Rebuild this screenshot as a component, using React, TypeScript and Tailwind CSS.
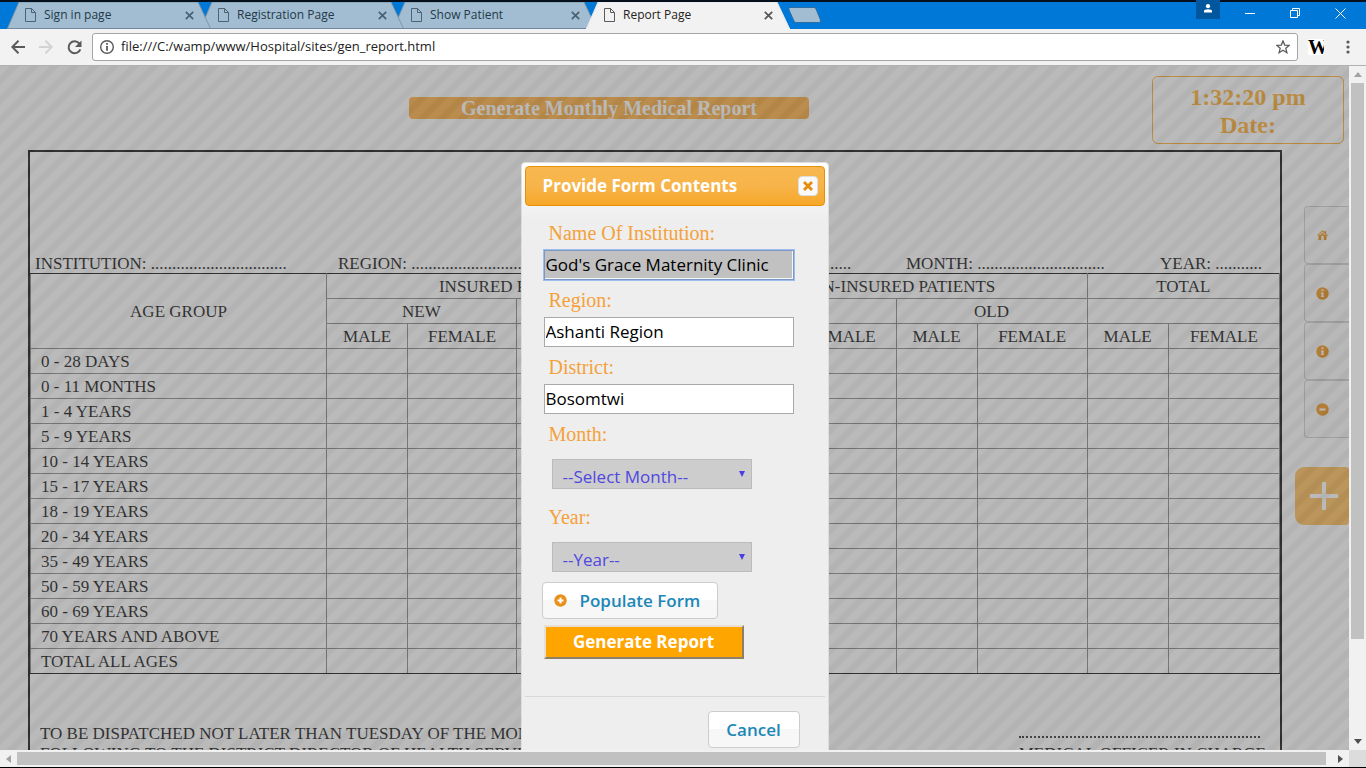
import type { ReactNode } from "react";

const tabs = ["Sign in page", "Registration Page", "Show Patient", "Report Page"];

const ageGroups = [
  "0 - 28 DAYS",
  "0 - 11 MONTHS",
  "1 - 4 YEARS",
  "5 - 9 YEARS",
  "10 - 14 YEARS",
  "15 - 17 YEARS",
  "18 - 19 YEARS",
  "20 - 34 YEARS",
  "35 - 49 YEARS",
  "50 - 59 YEARS",
  "60 - 69 YEARS",
  "70 YEARS AND ABOVE",
  "TOTAL ALL AGES",
];

const cell = "border border-[#808080] p-0 pt-0.5 font-normal";

function Tab({ title, active, order }: { title: string; active: boolean; order: string }) {
  return (
    <div className={`relative -mr-[11px] h-[27px] w-[204px] ${order}`}>
      <svg className="absolute inset-0 h-full w-full" viewBox="0 0 204 27" preserveAspectRatio="none" aria-hidden="true">
        <path
          d="M0.5 26.5 L12 0 H191 L203.5 26.5"
          fill={active ? "#f2f2f2" : "#a2bdd1"}
          stroke={active ? "#dfe8ef" : "#7d96a8"}
          strokeWidth="1"
        />
        {!active && <path d="M0 26.5 H204" stroke="#7288a0" />}
        {active && <path d="M0 26.5 H204" stroke="#f2f2f2" />}
      </svg>
      <div className="relative flex h-full items-center pb-px pl-[18px] pr-[17px]">
        <svg width="11" height="14" viewBox="0 0 11 14" fill="none" stroke={active ? "#5a5a5a" : "#4d6373"} aria-hidden="true">
          <path d="M0.5 0.5 H6.5 L10.5 4.5 V13.5 H0.5 Z M6.5 0.5 V4.5 H10.5" />
        </svg>
        <button type="button" className={`ml-2 flex-1 text-left text-[12px] ${active ? "text-[#222]" : "text-[#23394a]"}`}>
          {title}
        </button>
        <button type="button" aria-label={`Close ${title}`} className="p-0">
          <svg width="9" height="9" viewBox="0 0 9 9" stroke={active ? "#555" : "#4a6070"} strokeWidth="1.7">
            <path d="M0.8 0.8 L8.2 8.2 M8.2 0.8 L0.8 8.2" />
          </svg>
        </button>
      </div>
    </div>
  );
}

function WindowBar() {
  return (
    <header className="flex h-[29px] shrink-0 border-t-2 border-[#06101c] bg-[#0078d7]">
      <div className="flex flex-1 pl-[7px]">
        <Tab title={tabs[0]} active={false} order="z-30" />
        <Tab title={tabs[1]} active={false} order="z-20" />
        <Tab title={tabs[2]} active={false} order="z-10" />
        <Tab title={tabs[3]} active order="z-40" />
        <button type="button" aria-label="New tab" className="z-40 ml-[9px] mt-[5px] h-4 p-0">
          <svg width="34" height="16" viewBox="0 0 34 16">
            <path d="M1.5 0.5 H26 Q27.500 0.500 28 2 L32.500 13 Q33 15.500 31 15.500 H8 Q6.500 15.500 6 14 L1 3 Q0.500 0.500 1.500 0.500 Z" fill="#a2bdd1" stroke="#2f6ea5" />
          </svg>
        </button>
      </div>
      <button type="button" aria-label="User" className="-mt-0.5 flex h-[19px] w-6 justify-center bg-[#00579e] pt-1">
        <svg width="10" height="9" viewBox="0 0 10 9" fill="#fff">
          <circle cx="5" cy="2.200" r="2.100" />
          <path d="M1 8.500 V7 Q1 5.200 5 5.200 Q9 5.200 9 7 V8.500 Z" />
        </svg>
      </button>
      <div className="flex w-[146px] items-center justify-between pb-1 pl-[25px] pr-5">
        <button type="button" aria-label="Minimize">
          <svg width="10" height="11" viewBox="0 0 10 11" stroke="#fff"><path d="M0 5.500 H10" /></svg>
        </button>
        <button type="button" aria-label="Restore">
          <svg width="11" height="11" viewBox="0 0 11 11" stroke="#fff" fill="none">
            <path d="M0.500 2.500 H7.500 V9.500 H0.500 Z M2.500 2.500 V0.500 H9.500 V7.500 H7.500" />
          </svg>
        </button>
        <button type="button" aria-label="Close">
          <svg width="11" height="11" viewBox="0 0 11 11" stroke="#fff"><path d="M0.500 0.500 L10.500 10.500 M10.500 0.500 L0.500 10.500" /></svg>
        </button>
      </div>
    </header>
  );
}

function Toolbar() {
  return (
    <div className="flex h-[37px] shrink-0 items-center border-b border-[#b0b0b0] bg-[#f2f2f2] pl-[11px]">
      <button type="button" aria-label="Back">
        <svg width="14" height="14" viewBox="0 0 14 14" fill="none" stroke="#5a5a5a" strokeWidth="2"><path d="M14 7 H1.500 M7.500 0.800 L1.300 7 L7.500 13.200" /></svg>
      </button>
      <button type="button" aria-label="Forward" className="ml-3.5">
        <svg width="14" height="14" viewBox="0 0 14 14" fill="none" stroke="#d3d3d3" strokeWidth="2"><path d="M0 7 H12.500 M6.500 0.800 L12.700 7 L6.500 13.200" /></svg>
      </button>
      <button type="button" aria-label="Reload" className="ml-3.5">
        <svg width="15" height="15" viewBox="0 0 15 15" fill="none" stroke="#5a5a5a" strokeWidth="2">
          <path d="M12.300 3.500 A6 6 0 1 0 13.300 9.300" />
          <path d="M14.500 0.500 V7 H8 Z" fill="#5a5a5a" stroke="none" />
        </svg>
      </button>
      <div className="ml-2.5 flex h-7 flex-1 items-center rounded-[3px] border border-[#a5a5a5] bg-white pl-[7px] pr-[7px]">
        <svg width="14" height="14" viewBox="0 0 14 14" fill="none" stroke="#5a5a5a" aria-hidden="true">
          <circle cx="7" cy="7" r="6.300" strokeWidth="1.400" />
          <path d="M7 6 V10.800 M7 3 V4.800" strokeWidth="1.800" />
        </svg>
        <input
          aria-label="Address"
          className="ml-[7px] min-w-0 flex-1 bg-transparent text-[13px] text-[#222] outline-none"
          defaultValue="file:///C:/wamp/www/Hospital/sites/gen_report.html"
        />
        <button type="button" aria-label="Bookmark">
          <svg width="14" height="14" viewBox="0 0 14 14" fill="none" stroke="#5a5a5a" strokeWidth="1.300">
            <path d="M7 1 L8.700 5.100 L13.200 5.400 L9.800 8.300 L10.900 12.700 L7 10.300 L3.100 12.700 L4.200 8.300 L0.800 5.400 L5.300 5.100 Z" />
          </svg>
        </button>
      </div>
      <button type="button" aria-label="Wikipedia" className="ml-2.5 h-4 w-4 overflow-hidden bg-white text-left font-['Liberation_Serif',serif] text-[20px] leading-4 text-black">
        <span className="font-bold">W</span>
      </button>
      <button type="button" aria-label="Menu" className="ml-[19px] mr-[13px]">
        <svg width="10" height="14" viewBox="0 0 10 14" fill="#5a5a5a">
          <circle cx="5" cy="2" r="1.600" />
          <circle cx="5" cy="7" r="1.600" />
          <circle cx="5" cy="12" r="1.600" />
        </svg>
      </button>
    </div>
  );
}

function SideButton({ label, children }: { label: string; children: ReactNode }) {
  return (
    <button type="button" aria-label={label} className="flex h-[58px] w-[45px] items-center rounded-l-[4px] border border-r-0 border-[#ccc] bg-[#fafafa] pl-[11px]">
      <svg width="13" height="13" viewBox="0 0 13 13">{children}</svg>
    </button>
  );
}

function ReportTable() {
  return (
    <table className="w-full table-fixed border-collapse border border-black text-center leading-[22px] [&_thead_tr:first-child_th]:border-t-black [&_tbody_tr:last-child_td]:border-b-black [&_tbody_tr:last-child_th]:border-b-black">
      <colgroup>
        <col className="w-[23.700%]" />
        <col className="w-[6.500%]" />
        <col className="w-[8.700%]" />
        <col className="w-[6.500%]" />
        <col className="w-[8.700%]" />
        <col className="w-[6.500%]" />
        <col className="w-[8.700%]" />
        <col className="w-[6.500%]" />
        <col className="w-[8.800%]" />
        <col className="w-[6.500%]" />
        <col className="w-[8.900%]" />
      </colgroup>
      <thead>
        <tr className="h-[25px]">
          <th className={cell} rowSpan={3}>AGE GROUP</th>
          <th className={cell} colSpan={4}>INSURED PATIENTS</th>
          <th className={cell} colSpan={4}>NON-INSURED PATIENTS</th>
          <th className={cell} colSpan={2}>TOTAL</th>
        </tr>
        <tr className="h-[25px]">
          <th className={cell} colSpan={2}>NEW</th>
          <th className={cell} colSpan={2}>OLD</th>
          <th className={cell} colSpan={2}>NEW</th>
          <th className={cell} colSpan={2}>OLD</th>
          <td className={cell} colSpan={2} />
        </tr>
        <tr className="h-[25px]">
          {Array.from({ length: 10 }, (_, i) => (
            <th key={i} className={cell}>{i % 2 === 0 ? "MALE" : "FEMALE"}</th>
          ))}
        </tr>
      </thead>
      <tbody>
        {ageGroups.map((group) => (
          <tr key={group} className="h-[25px]">
            <th className="border border-[#808080] p-0 pl-2.5 pt-0.5 text-left font-normal">{group}</th>
            {Array.from({ length: 10 }, (_, i) => (
              <td key={i} className={cell} />
            ))}
          </tr>
        ))}
      </tbody>
    </table>
  );
}

function ReportPage() {
  return (
    <div className="flex h-full flex-col bg-white font-['Liberation_Serif',serif] text-[17px] text-black">
      <div className="flex shrink-0 items-start pr-[5px] pt-2.5">
        <div className="flex flex-1 justify-center pl-[66px] pt-[21px]">
          <h1 className="h-[22px] w-[400px] rounded-[4px] bg-[#ffa830] text-center text-[20px] font-bold leading-[22px] text-white">
            Generate Monthly Medical Report
          </h1>
        </div>
        <div className="h-[68px] w-48 rounded-[6px] border border-[#ffa820] pt-1.5 text-center text-[24px] font-bold leading-7 text-[#ffa820]">
          <p>1:32:20 pm</p>
          <p>Date:</p>
        </div>
      </div>
      <div className="flex min-h-0 flex-1 gap-[13px] pl-7 pt-1.5">
        <main className="flex-1 border-2 border-b-0 border-black">
          <div className="grid grid-cols-[303fr_284fr_284fr_254fr_120fr] whitespace-nowrap pl-[5px] pt-[102px] leading-[19px]">
            <p>INSTITUTION: ................................</p>
            <p>REGION: ................................</p>
            <p>DISTRICT: ..................................</p>
            <p>MONTH: ..............................</p>
            <p>YEAR: ...........</p>
          </div>
          <ReportTable />
          <div className="flex justify-between whitespace-nowrap pl-2.5 pr-3.5 pt-[50px] leading-5">
            <p>
              TO BE DISPATCHED NOT LATER THAN TUESDAY OF THE MONTH
              <br />
              FOLLOWING TO THE DISTRICT DIRECTOR OF HEALTH SERVICES
            </p>
            <div className="pt-3">
              <div className="mr-1.5 border-t-2 border-dotted border-[#222]" />
              <p className="pt-1.5">MEDICAL OFFICER IN CHARGE</p>
            </div>
          </div>
        </main>
        <aside className="flex w-[54px] flex-col items-end pt-14">
          <SideButton label="Home">
            <path d="M6.500 1 L1 6.500 H2.500 V11 H10.500 V6.500 H12 L10 4.500 V2 H8.500 V3 Z" fill="#ef8c08" />
            <path d="M5.500 11 V7 H7.500 V11 Z M3 6 L6.500 2.800 L10 6" fill="#fff" stroke="#fff" strokeWidth="0.500" />
            <path d="M4 7 H5 V10 H4 Z M8 7 H9 V10 H8 Z M4 5.800 L6.500 3.600 L9 5.800 Z" fill="#ef8c08" />
          </SideButton>
          <SideButton label="Patient information">
            <circle cx="6.500" cy="6.500" r="6.200" fill="#ef8c08" />
            <path d="M5.500 2.500 H7.500 V4 H5.500 Z M5 5.500 H7.500 V9 H8 V10 H5 V9 H5.500 V6.500 H5 Z" fill="#fff" />
          </SideButton>
          <SideButton label="Report information">
            <circle cx="6.500" cy="6.500" r="6.200" fill="#ef8c08" />
            <path d="M5.500 2.500 H7.500 V4 H5.500 Z M5 5.500 H7.500 V9 H8 V10 H5 V9 H5.500 V6.500 H5 Z" fill="#fff" />
          </SideButton>
          <SideButton label="Sign out">
            <circle cx="6.500" cy="6.500" r="6.200" fill="#ef8c08" />
            <path d="M3.500 5.500 H9.500 V7.500 H3.500 Z" fill="#fff" />
          </SideButton>
          <button type="button" aria-label="Add" className="mt-[29px] flex h-[58px] w-full items-center rounded-l-[9px] rounded-r-[4px] bg-[#ffb84d] pl-[15px]">
            <svg width="28" height="28" viewBox="0 0 28 28" fill="#fff"><path d="M12 0 H16 V12 H28 V16 H16 V28 H12 V16 H0 V12 H12 Z" /></svg>
          </button>
        </aside>
      </div>
    </div>
  );
}

const labelStyle = "flex h-[37px] items-center pl-[5px] pt-0.5 font-['Liberation_Serif',serif] text-[20px] text-[#f5a13a]";
const inputStyle = "block h-[30px] w-[250px] border border-[#a9a9a9] bg-white px-px pb-0.5 text-[17px] text-black outline-none";
const whiteButton = "rounded-[4px] border border-[#ccc] bg-linear-to-b from-white from-50% to-[#f7f7f7] to-50% font-semibold text-[#1c87b8] text-[17px]";

function SelectField({ id, label, placeholder }: { id: string; label: string; placeholder: string }) {
  return (
    <div>
      <label htmlFor={id} className={labelStyle}>{label}</label>
      <div className="relative my-2 ml-2 w-[200px]">
        <select id={id} className="block h-[30px] w-full appearance-none border border-[#bbb] bg-[#cdcdcd] pl-2.5 pt-1.5 text-[17px] leading-5 text-[#5048e0]">
          <option>{placeholder}</option>
        </select>
        <svg className="pointer-events-none absolute right-[7px] top-3" width="6" height="6" viewBox="0 0 6 6" fill="#4a3fe0" aria-hidden="true">
          <path d="M0 0 H6 L3 6 Z" />
        </svg>
      </div>
    </div>
  );
}

function FormDialog() {
  return (
    <div role="dialog" aria-labelledby="dialog-title" className="w-[308px] rounded-t-[4px] border border-[#ddd] bg-[#eee] bg-[linear-gradient(to_bottom,#fff_0,#fff_12px,#eee_56px)] p-[3px] font-['Open_Sans',sans-serif]">
      <div className="flex h-10 items-center justify-between rounded-[4px] border border-[#e78f08] bg-[linear-gradient(to_bottom,#f8b84f,#f7b44a_50%,#f6a828_100%)] pl-[17px] pr-1.5">
        <h2 id="dialog-title" className="text-[17px] font-bold text-white">Provide Form Contents</h2>
        <button type="button" aria-label="Close dialog" className="flex h-5 w-5 items-center justify-center rounded-[4px] border border-[#ddd] bg-[#f9f9f9]">
          <svg width="10" height="10" viewBox="0 0 10 10" stroke="#e58a0c" strokeWidth="2.800"><path d="M1 1 L9 9 M9 1 L1 9" /></svg>
        </button>
      </div>
      <form className="px-[19px] pt-[7px]">
        <label htmlFor="institution" className={labelStyle}>Name Of Institution:</label>
        <input id="institution" className="block h-[30px] w-[250px] border border-[#7d98c4] bg-[#c1c1c1] px-px pb-0.5 text-[17px] text-black shadow-[inset_-1px_-1px_0_#f4f7fc,0_0_0_1px_#9dbdea] outline-none" defaultValue="God's Grace Maternity Clinic" />
        <label htmlFor="region" className={labelStyle}>Region:</label>
        <input id="region" className={inputStyle} defaultValue="Ashanti Region" />
        <label htmlFor="district" className={labelStyle}>District:</label>
        <input id="district" className={inputStyle} defaultValue="Bosomtwi" />
        <SelectField id="month" label="Month:" placeholder="--Select Month--" />
        <SelectField id="year" label="Year:" placeholder="--Year--" />
        <button type="button" className={`-ml-0.5 mt-2.5 flex h-[37px] w-44 items-center pl-[11px] ${whiteButton}`}>
          <svg className="mr-[13px]" width="13" height="13" viewBox="0 0 13 13" aria-hidden="true">
            <circle cx="6.500" cy="6.500" r="6.200" fill="#e8901a" />
            <path d="M5.500 3.500 H7.500 V5.500 H9.500 V7.500 H7.500 V9.500 H5.500 V7.500 H3.500 V5.500 H5.500 Z" fill="#fff" />
          </svg>
          Populate Form
        </button>
        <button type="submit" className="mt-1.5 block h-[34px] w-[200px] border-2 border-b-[#8f7f66] border-l-[#e6dfd2] border-r-[#8f7f66] border-t-[#e6dfd2] bg-[#ffa500] text-[17px] font-bold leading-[30px] text-white">
          Generate Report
        </button>
      </form>
      <div className="mt-[37px] flex justify-end border-t border-[#d8d8d8] pb-4 pr-[25px] pt-3.5">
        <button type="button" className={`h-[37px] w-[92px] ${whiteButton}`}>Cancel</button>
      </div>
    </div>
  );
}

export default function App() {
  return (
    <div className="flex h-screen flex-col overflow-hidden border-b border-black bg-[#f1f1f1] font-['Open_Sans',sans-serif]">
      <WindowBar />
      <Toolbar />
      <div className="flex min-h-0 flex-1">
        <div className="relative min-w-0 flex-1 overflow-hidden">
          <ReportPage />
          <div className="absolute inset-0 bg-[repeating-linear-gradient(135deg,#6d6d6d_0_6px,#5e5e5e_8px_13px,#6d6d6d_14.142px)] bg-size-[40px_40px] opacity-47" />
          <div className="absolute inset-0 flex items-start justify-center overflow-hidden pt-24">
            <FormDialog />
          </div>
        </div>
        <div className="flex w-[17px] flex-col items-center py-1.5">
          <svg width="8" height="5" viewBox="0 0 8 5" fill="#a3a3a3"><path d="M4 0 L8 5 H0 Z" /></svg>
          <div className="mt-1.5 h-[556px] w-[13px] bg-[#c1c1c1]" />
          <svg className="mt-auto" width="8" height="5" viewBox="0 0 8 5" fill="#505050"><path d="M4 5 L8 0 H0 Z" /></svg>
        </div>
      </div>
      <div className="flex h-[17px] shrink-0 items-center">
        <div className="flex flex-1 items-center justify-between pl-1.5 pr-1.5">
          <svg width="5" height="8" viewBox="0 0 5 8" fill="#a3a3a3"><path d="M0 4 L5 0 V8 Z" /></svg>
          <div className="ml-1.5 mr-3 h-[13px] flex-1 bg-[#c1c1c1]" />
          <svg width="5" height="8" viewBox="0 0 5 8" fill="#505050"><path d="M5 4 L0 0 V8 Z" /></svg>
        </div>
        <div className="h-full w-[17px] bg-[#dcdcdc]" />
      </div>
    </div>
  );
}
